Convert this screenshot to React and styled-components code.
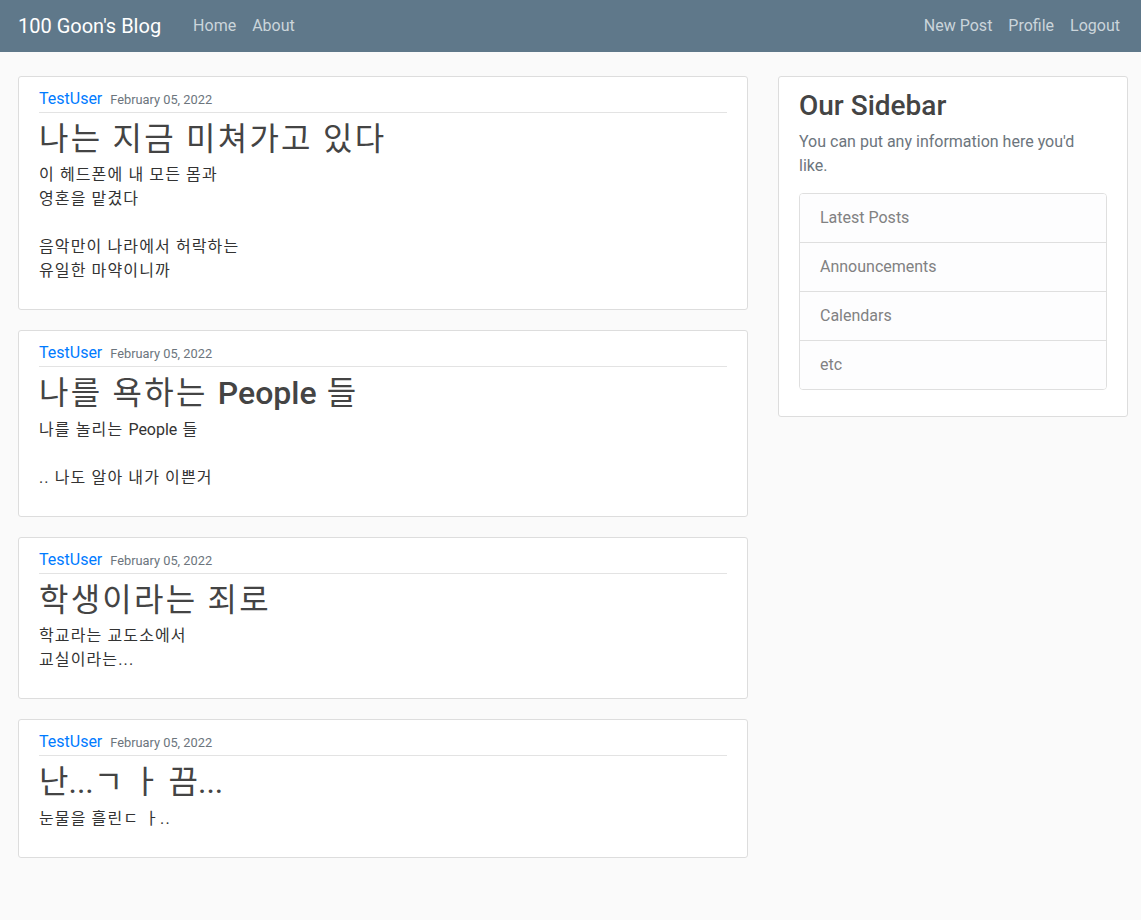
import React from "react";
import styled, { createGlobalStyle } from "styled-components";

const GlobalStyle = createGlobalStyle`
    body {
        margin: 0;
        background: #fafafa;
        color: #333333;
        font-family: Roboto, "Noto Sans CJK KR", sans-serif;
        font-size: 16px;
        line-height: 1.5;
    }
    * { box-sizing: border-box; }
`;

const Header = styled.header`
    background: #5f788a;
    height: 52px;
`;

const NavInner = styled.nav`
    width: 1110px;
    margin-left: 18px;
    height: 100%;
    display: flex;
    align-items: center;
`;

const Brand = styled.a`
    color: #ffffff;
    font-size: 20px;
    margin-right: 24px;
    text-decoration: none;
`;

const NavGroup = styled.div`
    display: flex;
    margin-left: ${({right}) => right ? 'auto' : '0'};
`;

const NavLink = styled.a`
    color: #cbd5db;
    padding: 8px;
    text-decoration: none;
`;

const Main = styled.main`
    width: 1110px;
    margin: 24px 0 0 18px;
    display: grid;
    grid-template-columns: 730px 350px;
    gap: 30px;
    align-items: start;
`;

const Column = styled.div`
    display: flex;
    flex-direction: column;
    gap: 20px;
`;

const Section = styled.article`
    background: #ffffff;
    padding: 10px 20px;
    border: 1px solid #dddddd;
    border-radius: 3px;
`;

const Metadata = styled.div`
    padding-bottom: 1px;
    margin-bottom: 4px;
    border-bottom: 1px solid #e3e3e3;
`;

const Author = styled.a`
    color: #007bff;
    margin-right: 8px;
    text-decoration: none;
`;

const PostDate = styled.small`
    color: #6c757d;
    font-size: 12.8px;
`;

// hangul in Noto CJK is narrower than in the original, so space it out a bit
const Title = styled.h2`
    color: #444444;
    font-size: 32px;
    font-weight: 400;
    line-height: 1.2;
    letter-spacing: 0.07em;
    padding-top: 3px;
    margin: 0 0 5px;
`;

const Latin = styled.span`
    font-weight: ${({bold}) => bold ? 500 : 400};
    letter-spacing: normal;
`;

const Content = styled.p`
    white-space: pre-line;
    letter-spacing: 0.07em;
    margin: 0 0 16px;
`;

const SideTitle = styled.h3`
    color: #444444;
    font-size: 28px;
    font-weight: 500;
    line-height: 1.2;
    margin: 2px 0 7px;
`;

const Muted = styled.p`
    color: #6c757d;
    max-width: 290px;
    margin: 0 0 15px;
`;

const ListGroup = styled.ul`
    list-style: none;
    padding: 0;
    margin: 0 0 16px;
    border: 1px solid #dfdfdf;
    border-radius: 4px;
    overflow: hidden;
`;

const ListItem = styled.li`
    background: #fdfdfe;
    color: #818182;
    padding: 12px 20px;
    & + & { border-top: 1px solid #dfdfdf; }
`;

const posts = [
    { title: '나는 지금 미쳐가고 있다', content: '이 헤드폰에 내 모든 몸과\n영혼을 맡겼다\n\n음악만이 나라에서 허락하는\n유일한 마약이니까' },
    { title: <>나를 욕하는 <Latin bold>People</Latin> 들</>, content: <>나를 놀리는 <Latin>People</Latin> 들{'\n\n'}.. 나도 알아 내가 이쁜거</> },
    { title: '학생이라는 죄로', content: '학교라는 교도소에서\n교실이라는...' },
    { title: <Latin>난...ㄱ ㅏ 끔...</Latin>, content: '눈물을 흘린ㄷ ㅏ..' },
];

export default function App() {
    return (
        <>
            <GlobalStyle />
            <Header>
                <NavInner>
                    <Brand href="#">100 Goon's Blog</Brand>
                    <NavGroup>
                        <NavLink href="#">Home</NavLink>
                        <NavLink href="#">About</NavLink>
                    </NavGroup>
                    <NavGroup right>
                        <NavLink href="#">New Post</NavLink>
                        <NavLink href="#">Profile</NavLink>
                        <NavLink href="#">Logout</NavLink>
                    </NavGroup>
                </NavInner>
            </Header>
            <Main>
                <Column>
                    {posts.map((post, i) => (
                        <Section key={i}>
                            <Metadata>
                                <Author href="#">TestUser</Author>
                                <PostDate>February 05, 2022</PostDate>
                            </Metadata>
                            <Title>{post.title}</Title>
                            <Content>{post.content}</Content>
                        </Section>
                    ))}
                </Column>
                <Section>
                    <SideTitle>Our Sidebar</SideTitle>
                    <Muted>You can put any information here you'd like.</Muted>
                    <ListGroup>
                        <ListItem>Latest Posts</ListItem>
                        <ListItem>Announcements</ListItem>
                        <ListItem>Calendars</ListItem>
                        <ListItem>etc</ListItem>
                    </ListGroup>
                </Section>
            </Main>
        </>
    );
}
